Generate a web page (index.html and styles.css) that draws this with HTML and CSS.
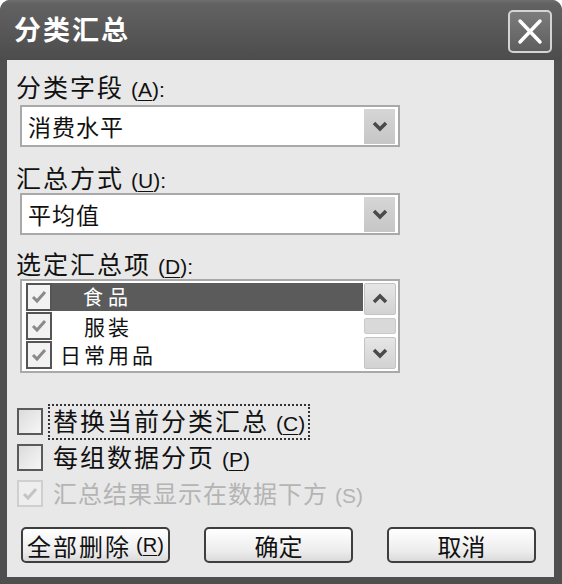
FILE: index.html
```html
<!DOCTYPE html>
<html lang="zh-CN">
<head>
  <meta charset="UTF-8" />
  <title>分类汇总</title>
  <link rel="stylesheet" href="styles.css">
</head>
<body>
  <div class="window">
    <div class="titlebar">
      <span class="title">分类汇总</span>
      <span class="close">
        <svg width="40" height="39" viewBox="0 0 40 39"><path d="M10 9 L30 30 M30 9 L10 30" stroke="#fff" stroke-width="3.5" stroke-linecap="round"/></svg>
      </span>
    </div>

    <div class="content">
      <div class="label first">分类字段<span class="key">(<u>A</u>):</span></div>
      <div class="combo">
        <span class="value">消费水平</span>
        <span class="drop"><svg width="16" height="12" viewBox="0 0 16 12"><path d="M2 3 L8 9 L14 3" stroke="#4a4a4a" stroke-width="3.5" fill="none"/></svg></span>
      </div>

      <div class="label second">汇总方式<span class="key">(<u>U</u>):</span></div>
      <div class="combo">
        <span class="value">平均值</span>
        <span class="drop"><svg width="16" height="12" viewBox="0 0 16 12"><path d="M2 3 L8 9 L14 3" stroke="#4a4a4a" stroke-width="3.5" fill="none"/></svg></span>
      </div>

      <div class="label third">选定汇总项<span class="key">(<u>D</u>):</span></div>
      <div class="listbox">
        <div class="items">
          <div class="item">
            <span class="box"><svg width="20" height="20" viewBox="0 0 20 20"><path d="M4 10 L8 14 L16 5" stroke="#8a8a8a" stroke-width="3" fill="none"/></svg></span>
            <span class="text selected"><span class="pad-food">食品</span></span>
          </div>
          <div class="item">
            <span class="box"><svg width="20" height="20" viewBox="0 0 20 20"><path d="M4 10 L8 14 L16 5" stroke="#8a8a8a" stroke-width="3" fill="none"/></svg></span>
            <span class="text"><span class="pad-cloth">服装</span></span>
          </div>
          <div class="item">
            <span class="box"><svg width="20" height="20" viewBox="0 0 20 20"><path d="M4 10 L8 14 L16 5" stroke="#8a8a8a" stroke-width="3" fill="none"/></svg></span>
            <span class="text">日常用品</span>
          </div>
        </div>
        <div class="scrollbar">
          <span class="sb-btn"><svg width="18" height="12" viewBox="0 0 18 12"><path d="M3 9 L9 3 L15 9" stroke="#4a4a4a" stroke-width="3.5" fill="none"/></svg></span>
          <span class="sb-thumb"></span>
          <span class="sb-btn"><svg width="18" height="12" viewBox="0 0 18 12"><path d="M3 3 L9 9 L15 3" stroke="#4a4a4a" stroke-width="3.5" fill="none"/></svg></span>
        </div>
      </div>

      <div class="options">
        <div class="opt">
          <span class="cb"></span>
          <span class="opt-text focus">替换当前分类汇总<span class="key">(<u>C</u>)</span></span>
        </div>
        <div class="opt">
          <span class="cb"></span>
          <span class="opt-text">每组数据分页<span class="key">(<u>P</u>)</span></span>
        </div>
        <div class="opt disabled">
          <span class="cb"><svg width="20" height="20" viewBox="0 0 20 20"><path d="M4 10 L8 14 L16 5" stroke="#c4c4c4" stroke-width="3" fill="none"/></svg></span>
          <span class="opt-text">汇总结果显示在数据下方<span class="key">(S)</span></span>
        </div>
      </div>

      <div class="buttons">
        <span class="btn wide">全部删除<span class="key">(<u>R</u>)</span></span>
        <span class="btn">确定</span>
        <span class="btn">取消</span>
      </div>
    </div>
  </div>
</body>
</html>
```

FILE: styles.css
```css
body {
  margin: 0;
  background: #fff;
  font-family: "Noto Sans CJK SC", "Liberation Sans", sans-serif;
  color: #111;
}
.window {
  width: 562px;
  height: 584px;
  box-sizing: border-box;
  display: flex;
  flex-direction: column;
  background: #4f4f4f;
  border-radius: 10px 10px 0 0;
  padding: 0 8px 7px 7px;
}
.titlebar {
  height: 60px;
  display: flex;
  align-items: center;
  justify-content: space-between;
  margin: 0 -8px 0 -7px;
  padding: 0 10px 0 14px;
  border-radius: 10px 10px 0 0;
  background: linear-gradient(#6e6e6e 0, #626262 4px, #585858 30px, #4c4c4c 60px);
}
.title {
  color: #fff;
  font-size: 27px;
  font-weight: bold;
  letter-spacing: 2px;
  margin-top: -4px;
}
.close {
  width: 40px;
  height: 39px;
  border: 2px solid #d4d4d4;
  border-radius: 5px;
  background: linear-gradient(#7c7c7c, #5e5e5e);
  display: flex;
  align-items: center;
  justify-content: center;
  margin-top: 2px;
}
.content {
  flex: 1;
  background: #e8e8e8;
  display: flex;
  flex-direction: column;
}
.key {
  font-family: "Liberation Sans", sans-serif;
  font-size: 21px;
  letter-spacing: 0;
  margin-left: 7px;
}
.key u {
  text-decoration-thickness: 1px;
  text-underline-offset: 3px;
}
.label {
  font-size: 25px;
  letter-spacing: 2px;
  line-height: 28px;
  height: 28px;
  padding-left: 9px;
  white-space: nowrap;
}
.label.first { margin-top: 12px; }
.label.second { margin-top: 16px; }
.label.third { margin-top: 14px; }
.combo {
  margin: 5px 0 0 13px;
  width: 380px;
  height: 42px;
  box-sizing: border-box;
  border: 2px solid #a9a9a9;
  background: #fff;
  display: flex;
  align-items: center;
  justify-content: space-between;
  padding: 0 3px 0 6px;
}
.label.second + .combo { margin-top: 2px; }
.value {
  font-size: 23px;
  letter-spacing: 1px;
}
.drop {
  width: 31px;
  height: 35px;
  background: linear-gradient(#d6d6d6, #c6c6c6);
  display: flex;
  align-items: center;
  justify-content: center;
}
.listbox {
  margin: 2px 0 0 13px;
  width: 380px;
  height: 94px;
  box-sizing: border-box;
  border: 2px solid #a9a9a9;
  background: #fff;
  display: flex;
  padding: 2px 2px 2px 4px;
}
.items {
  flex: 1;
  display: flex;
  flex-direction: column;
}
.item {
  height: 29px;
  display: flex;
  align-items: center;
}
.box {
  width: 26px;
  height: 28px;
  box-sizing: border-box;
  border: 2px solid #555;
  background: #f2f2f2;
  display: flex;
  align-items: center;
  justify-content: center;
}
.text {
  flex: 1;
  height: 28px;
  display: flex;
  align-items: center;
  font-size: 21px;
  letter-spacing: 3px;
  line-height: 1;
  padding-left: 8px;
  white-space: nowrap;
}
.text.selected {
  background: #5b5b5b;
  color: #fff;
}
.pad-food {
  padding-left: 23px;
  font-size: 20px;
  letter-spacing: 5px;
}
.pad-cloth {
  padding-left: 24px;
}
.scrollbar {
  width: 32px;
  display: flex;
  flex-direction: column;
  gap: 3px;
  margin-left: 1px;
}
.sb-btn {
  height: 32px;
  box-sizing: border-box;
  border: 1px solid #c4c4c4;
  border-radius: 2px;
  background: linear-gradient(#e6e6e6, #d2d2d2);
  display: flex;
  align-items: center;
  justify-content: center;
}
.sb-thumb {
  height: 15px;
  border-radius: 2px;
  background: #d9d9d9;
  border: 1px solid #cacaca;
}
.options {
  margin-top: 32px;
  display: flex;
  flex-direction: column;
  gap: 3px;
  padding-left: 10px;
}
.opt {
  height: 33px;
  display: flex;
  align-items: center;
  gap: 5px;
}
.cb {
  width: 26px;
  height: 27px;
  box-sizing: border-box;
  border: 2px solid #5a5a5a;
  background: linear-gradient(135deg, #dcdcdc, #f6f6f6);
  display: flex;
  align-items: center;
  justify-content: center;
}
.opt-text {
  font-size: 25px;
  letter-spacing: 2px;
  line-height: 29px;
  padding: 0 3px 0 3px;
  white-space: nowrap;
  border: 2px dotted transparent;
}
.opt-text.focus {
  border-color: #333;
}
.opt.disabled .cb {
  border-color: #cfcfcf;
  background: #eeeeee;
}
.opt.disabled .opt-text {
  color: #b4b4b4;
  font-size: 24px;
  letter-spacing: 1px;
}
.buttons {
  margin-top: 17px;
  display: flex;
  gap: 34px;
  padding-left: 14px;
}
.btn {
  width: 149px;
  height: 36px;
  box-sizing: border-box;
  border: 2px solid #3e3e3e;
  border-radius: 5px;
  background: linear-gradient(#ffffff, #ececec 70%, #dadada);
  display: flex;
  align-items: center;
  justify-content: center;
  font-size: 24px;
  white-space: nowrap;
}
.btn.wide {
  letter-spacing: 2px;
}
.btn .key {
  margin-left: 5px;
  font-size: 20px;
}
```
